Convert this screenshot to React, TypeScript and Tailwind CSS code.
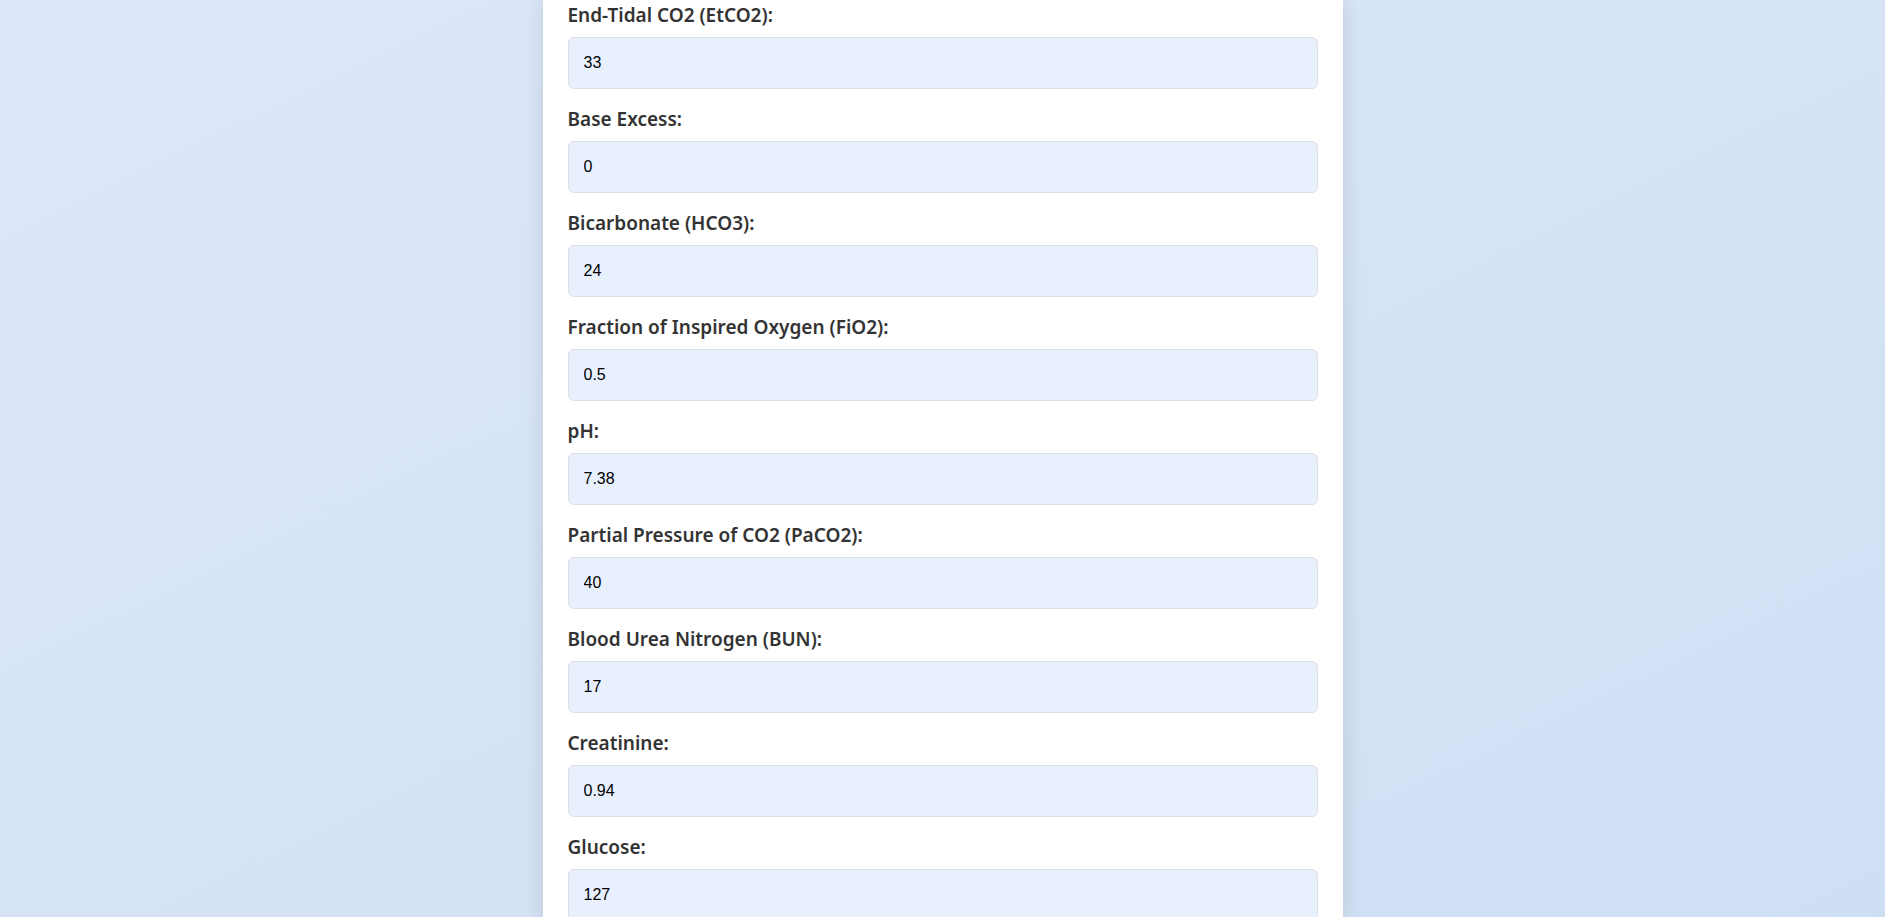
const fields = [
  { label: "End-Tidal CO2 (EtCO2):", value: "33" },
  { label: "Base Excess:", value: "0" },
  { label: "Bicarbonate (HCO3):", value: "24" },
  { label: "Fraction of Inspired Oxygen (FiO2):", value: "0.5" },
  { label: "pH:", value: "7.38" },
  { label: "Partial Pressure of CO2 (PaCO2):", value: "40" },
  { label: "Blood Urea Nitrogen (BUN):", value: "17" },
  { label: "Creatinine:", value: "0.94" },
  { label: "Glucose:", value: "127" },
];

const App = () => {
  return (
    <div className="h-screen overflow-hidden bg-gradient-to-br from-[#dde7f9] to-[#cfdff3] font-['Segoe_UI','Noto_Sans',sans-serif]">
      <div className="mx-auto w-[800px] min-h-full bg-white px-[25px] pt-px shadow-[0_0_20px_rgba(0,0,0,0.12)]">
        {fields.map((f) => (
          <div key={f.label} className="mb-4">
            <label className="block mb-[7px] text-[19px] leading-[29px] font-semibold text-[#333]">
              {f.label}
            </label>
            <input
              type="text"
              defaultValue={f.value}
              className="block w-full h-[52px] px-[15px] rounded-md border border-[#dcdfe6] bg-[#e8f0fe] text-[16px] text-black font-['Liberation_Sans',Arial,sans-serif] outline-none"
            />
          </div>
        ))}
      </div>
    </div>
  );
};

export default App;
